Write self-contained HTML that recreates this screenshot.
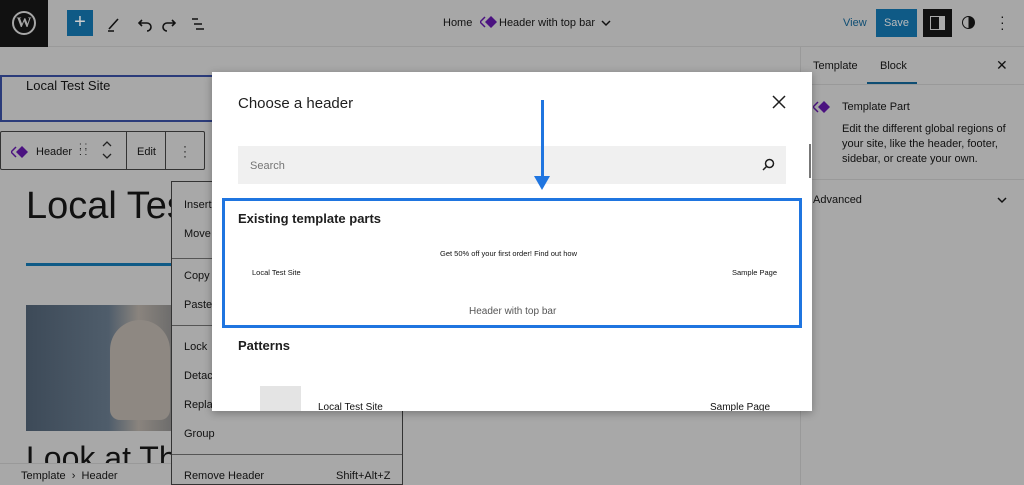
<!DOCTYPE html>
<html><head><style>
*{margin:0;padding:0;box-sizing:border-box}
body{width:1024px;height:485px;overflow:hidden;background:#a8a8a8;font-family:"Liberation Sans",sans-serif;color:#111;position:relative}
.a{position:absolute}
.t{font-size:11px}
</style></head><body>
<!-- top bar -->
<div class="a" style="left:0;top:0;width:1024px;height:47px;border-bottom:1px solid #9a9a9a;background:#a7a7a7"></div>
<div class="a" style="left:0;top:0;width:48px;height:47px;background:#111"></div>
<div class="a" style="left:12px;top:11px;width:24px;height:24px;border-radius:50%;border:2px solid #a7a7a7;color:#a7a7a7;font:bold 15px 'Liberation Serif',serif;text-align:center;line-height:20px">W</div>
<div class="a" style="left:67px;top:10px;width:26px;height:26px;background:#0f5a86;color:#ccc;font-size:20px;text-align:center;line-height:25px">+</div>
<svg class="a" style="left:104px;top:12px" width="120" height="22" fill="none" stroke="#111" stroke-width="1.6">
<path d="M5 17l9-10M4 19h6"/><path d="M38 8l-3 3 3 3M35 11h8a4 4 0 0 1 0 8"/><path d="M68 8l3 3-3 3M71 11h-8a4 4 0 0 0 0 8"/><path d="M88 7h6M90 12h8M92 17h8"/>
</svg>
<div class="a t" style="left:443px;top:17px">Home</div>
<svg class="a" style="left:480px;top:15px" width="18" height="14"><path d="M5 7l6-6 6 6-6 6z" fill="#4b1280"/><path d="M5 2L0 7l5 5" stroke="#4b1280" stroke-width="1.5" fill="none"/></svg>
<div class="a t" style="left:499px;top:17px">Header with top bar</div>
<svg class="a" style="left:600px;top:18px" width="12" height="10"><path d="M2 3l4 4 4-4" stroke="#111" stroke-width="1.5" fill="none"/></svg>
<div class="a t" style="left:843px;top:17px;color:#0e4d73">View</div>
<div class="a t" style="left:876px;top:9px;width:41px;height:28px;background:#0f5a86;color:#bbb;text-align:center;line-height:28px">Save</div>
<div class="a" style="left:923px;top:9px;width:29px;height:28px;background:#111"></div>
<div class="a" style="left:930px;top:16px;width:15px;height:14px;border:1.5px solid #aaa"><div style="position:absolute;right:0;top:0;width:5px;height:100%;background:#aaa"></div></div>
<div class="a" style="left:962px;top:16px;width:13px;height:13px;border-radius:50%;border:1.5px solid #111;background:linear-gradient(90deg,#a7a7a7 50%,#111 50%)"></div>
<div class="a" style="left:1000px;top:13px;font-size:14px;line-height:6px">·<br>·<br>·</div>
<!-- sidebar -->
<div class="a" style="left:800px;top:47px;width:224px;height:438px;border-left:1px solid #999"></div>
<div class="a t" style="left:813px;top:60px">Template</div>
<div class="a t" style="left:880px;top:60px">Block</div>
<div class="a" style="left:867px;top:82px;width:50px;height:2px;background:#0e4d73"></div>
<div class="a" style="left:801px;top:84px;width:223px;border-top:1px solid #999"></div>
<div class="a" style="left:996px;top:57px;font-size:14px">✕</div>
<svg class="a" style="left:813px;top:100px" width="18" height="14"><path d="M5 7l6-6 6 6-6 6z" fill="#4b1280"/><path d="M5 2L0 7l5 5" stroke="#4b1280" stroke-width="1.5" fill="none"/></svg>
<div class="a t" style="left:842px;top:101px">Template Part</div>
<div class="a t" style="left:842px;top:122px;line-height:15px;width:170px">Edit the different global regions of your site, like the header, footer, sidebar, or create your own.</div>
<div class="a" style="left:801px;top:179px;width:223px;border-top:1px solid #999"></div>
<div class="a t" style="left:813px;top:194px">Advanced</div>
<svg class="a" style="left:996px;top:195px" width="12" height="10"><path d="M2 3l4 4 4-4" stroke="#111" stroke-width="1.5" fill="none"/></svg>
<!-- canvas -->
<div class="a" style="left:0;top:75px;width:213px;height:47px;border:2px solid #2b3b7a;border-right:none"></div>
<div class="a" style="left:26px;top:78px;font-size:13px">Local Test Site</div>
<div class="a" style="left:0;top:131px;width:205px;height:39px;border:1px solid #333;border-radius:2px"></div>
<div class="a" style="left:126px;top:131px;height:39px;border-left:1px solid #333"></div>
<div class="a" style="left:165px;top:131px;height:39px;border-left:1px solid #333"></div>
<svg class="a" style="left:11px;top:145px" width="18" height="14"><path d="M5 7l6-6 6 6-6 6z" fill="#4b1280"/><path d="M5 2L0 7l5 5" stroke="#4b1280" stroke-width="1.5" fill="none"/></svg>
<div class="a t" style="left:36px;top:146px">Header</div>
<div class="a" style="left:79px;top:144px;font-size:10px;line-height:6px">: :<br>: :</div>
<svg class="a" style="left:100px;top:140px" width="14" height="22" fill="none" stroke="#222" stroke-width="1.3"><path d="M3 6l4-4 4 4M3 14l4 4 4-4"/></svg>
<div class="a t" style="left:137px;top:146px">Edit</div>
<div class="a" style="left:183px;top:144px;font-size:12px;line-height:5px">·<br>·<br>·</div>
<div class="a" style="left:26px;top:185px;font-size:38px">Local Tes</div>
<div class="a" style="left:26px;top:263px;width:150px;height:3px;background:#0f5a86"></div>
<div class="a" style="left:26px;top:305px;width:150px;height:126px;background:linear-gradient(90deg,#3d4a58 0%,#4f5d6b 55%,#8a847e 75%,#6a6a6a 100%)"></div>
<div class="a" style="left:110px;top:320px;width:60px;height:100px;border-radius:30px 30px 10px 10px;background:#8e8882"></div>
<div class="a" style="left:26px;top:440px;font-size:32px">Look at Thi</div>
<!-- menu -->
<div class="a" style="left:171px;top:181px;width:232px;height:304px;background:#a8a8a8;border:1px solid #333"></div>
<div class="a t" style="left:184px;top:191px;line-height:29px">Insert<br>Move</div>
<div class="a" style="left:172px;top:258px;width:230px;border-top:1px solid #555"></div>
<div class="a t" style="left:184px;top:262px;line-height:29px">Copy<br>Paste</div>
<div class="a" style="left:172px;top:325px;width:230px;border-top:1px solid #555"></div>
<div class="a t" style="left:184px;top:333px;line-height:29px">Lock<br>Detach<br>Replace<br>Group</div>
<div class="a" style="left:172px;top:454px;width:230px;border-top:1px solid #555"></div>
<div class="a t" style="left:184px;top:470px">Remove Header</div>
<div class="a t" style="left:336px;top:470px">Shift+Alt+Z</div>
<div class="a" style="left:0;top:463px;width:171px;height:22px;background:#a8a8a8;border-top:1px solid #999"></div>
<div class="a t" style="left:21px;top:470px">Template &nbsp;›&nbsp; Header</div>
<!-- modal -->
<div class="a" style="left:212px;top:72px;width:600px;height:339px;background:#fff;box-shadow:0 2px 8px rgba(0,0,0,.3);overflow:hidden">
<div class="a" style="left:26px;top:23px;font-size:15px;color:#1e1e1e">Choose a header</div>
<svg class="a" style="left:560px;top:23px" width="14" height="14" stroke="#1e1e1e" stroke-width="1.5"><path d="M1 1l12 12M13 1L1 13"/></svg>
<div class="a" style="left:26px;top:74px;width:548px;height:38px;background:#f0f0f0"></div>
<div class="a t" style="left:38px;top:88px;color:#757575">Search</div>
<svg class="a" style="left:550px;top:86px" width="13" height="13" fill="none" stroke="#1e1e1e" stroke-width="1.5"><circle cx="7.5" cy="5.5" r="4"/><path d="M4.5 8.5L1 12"/></svg>
<div class="a" style="left:597px;top:72px;width:2px;height:34px;background:#777"></div>
<div class="a" style="left:10px;top:126px;width:580px;height:130px;border:3px solid #1f75e0"></div>
<div class="a" style="left:26px;top:139px;font-size:13px;font-weight:bold;color:#1e1e1e">Existing template parts</div>
<div class="a" style="left:228px;top:177px;font-size:7.5px">Get 50% off your first order! Find out how</div>
<div class="a" style="left:40px;top:196px;font-size:7.5px">Local Test Site</div>
<div class="a" style="left:520px;top:196px;font-size:7.5px">Sample Page</div>
<div class="a" style="left:257px;top:234px;font-size:10px;color:#555">Header with top bar</div>
<div class="a" style="left:26px;top:266px;font-size:13px;font-weight:bold;color:#1e1e1e">Patterns</div>
<div class="a" style="left:48px;top:314px;width:41px;height:30px;background:#e4e4e4"></div>
<div class="a" style="left:106px;top:330px;font-size:10px">Local Test Site</div>
<div class="a" style="left:498px;top:330px;font-size:10px">Sample Page</div>
</div>
<!-- arrow -->
<div class="a" style="left:541px;top:100px;width:3px;height:80px;background:#1f75e0"></div>
<svg class="a" style="left:534px;top:176px" width="16" height="14"><path d="M0 0h16L8 14z" fill="#1f75e0"/></svg>
</body></html>
